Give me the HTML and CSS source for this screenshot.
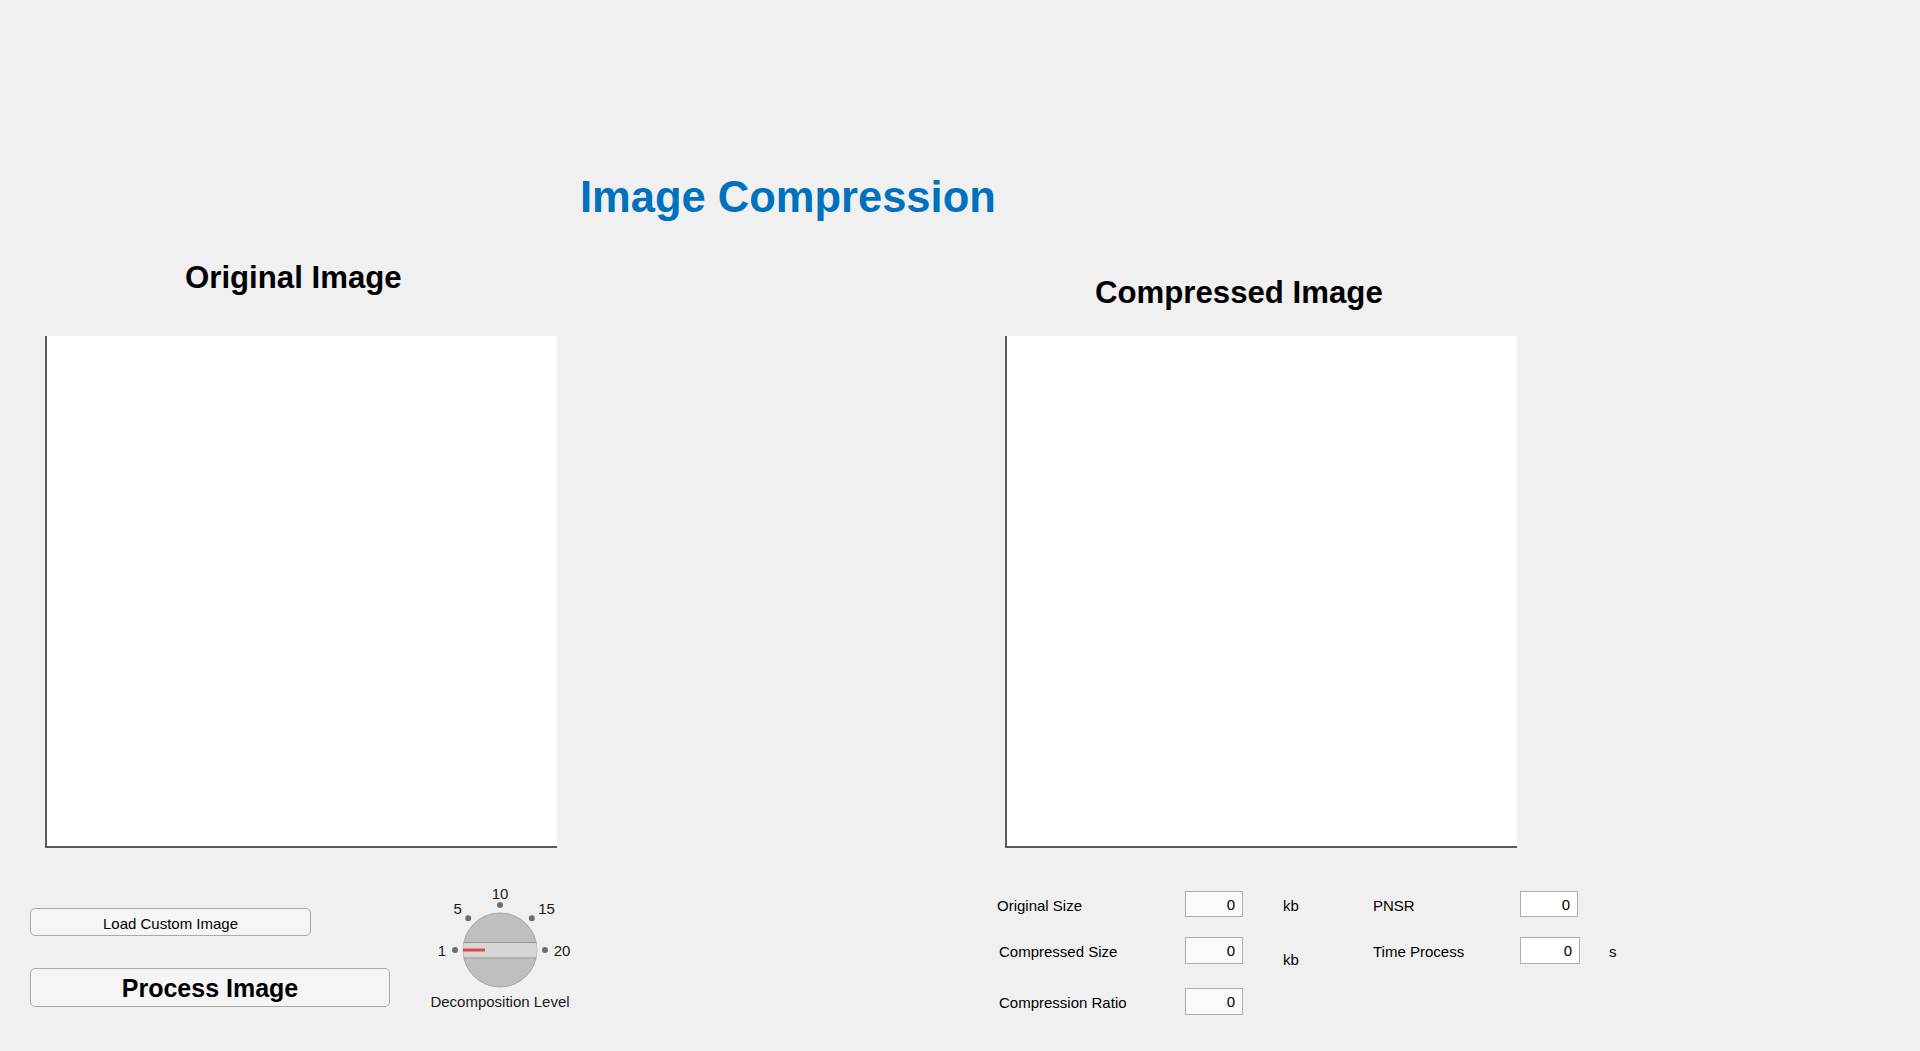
FILE: index.html
```html
<!DOCTYPE html>
<html lang="en">
<head>
<meta charset="utf-8">
<title>Image Compression</title>
<link rel="stylesheet" href="styles.css">
</head>
<body>
<div class="app">
  <h1 class="app-title">Image Compression</h1>

  <div class="panels">
    <section class="panel panel-left">
      <h2 class="panel-title">Original Image</h2>
      <div class="axes"></div>
    </section>
    <section class="panel panel-right">
      <h2 class="panel-title">Compressed Image</h2>
      <div class="axes"></div>
    </section>
  </div>

  <div class="controls">
    <div class="buttons">
      <button class="btn btn-load" type="button">Load Custom Image</button>
      <button class="btn btn-process" type="button">Process Image</button>
    </div>

    <div class="knob">
      <div class="dial">
        <svg class="dial-svg" viewBox="0 0 150 113" width="150" height="113" aria-hidden="true">
          <defs>
            <clipPath id="knobClip"><circle cx="75" cy="70" r="37"/></clipPath>
          </defs>
          <circle cx="75" cy="70" r="37" fill="#bfbfbf" stroke="#a6a6a6" stroke-width="1"/>
          <g clip-path="url(#knobClip)">
            <rect x="37" y="62.5" width="76" height="15.5" fill="#d6d6d6"/>
            <line x1="37" y1="62.5" x2="113" y2="62.5" stroke="#969696" stroke-width="1"/>
            <line x1="37" y1="78" x2="113" y2="78" stroke="#969696" stroke-width="1"/>
          </g>
          <line x1="38" y1="70" x2="60" y2="70" stroke="#e0464c" stroke-width="3"/>
          <circle cx="30" cy="70" r="3" fill="#6e6e6e"/>
          <circle cx="43.2" cy="38.2" r="3" fill="#6e6e6e"/>
          <circle cx="75" cy="25" r="3" fill="#6e6e6e"/>
          <circle cx="106.8" cy="38.2" r="3" fill="#6e6e6e"/>
          <circle cx="120" cy="70" r="3" fill="#6e6e6e"/>
        </svg>
        <span class="tick t1">1</span>
        <span class="tick t5">5</span>
        <span class="tick t10">10</span>
        <span class="tick t15">15</span>
        <span class="tick t20">20</span>
      </div>
      <div class="knob-label">Decomposition Level</div>
    </div>

    <div class="stats">
      <div class="stat-row r1">
        <span class="stat-label">Original Size</span>
        <span class="field field-soft">0</span>
        <span class="unit">kb</span>
        <span class="stat-label2">PNSR</span>
        <span class="field">0</span>
      </div>
      <div class="stat-row r2">
        <span class="stat-label">Compressed Size</span>
        <span class="field field-soft">0</span>
        <span class="unit unit-low">kb</span>
        <span class="stat-label2">Time Process</span>
        <span class="field field-wide">0</span>
        <span class="unit-s">s</span>
      </div>
      <div class="stat-row r3">
        <span class="stat-label">Compression Ratio</span>
        <span class="field field-soft">0</span>
      </div>
    </div>
  </div>
</div>
</body>
</html>
```

FILE: styles.css
```css
html, body {
  margin: 0;
  padding: 0;
}

body {
  background: #f0f0f0;
  font-family: "Liberation Sans", Arial, Helvetica, sans-serif;
  color: #000;
  width: 1920px;
  height: 1051px;
  overflow: hidden;
}

.app-title {
  margin: 0;
  padding: 172px 0 0 580px;
  font-size: 43.5px;
  line-height: 50px;
  font-weight: 700;
  color: #0072bd;
  white-space: nowrap;
}

.panels {
  display: flex;
  padding-left: 45px;
  gap: 448px;
}

.panel {
  width: 512px;
  display: flex;
  flex-direction: column;
}

.panel-title {
  font-size: 31.2px;
  line-height: 36px;
  font-weight: 700;
  color: #000;
  white-space: nowrap;
}

.panel-left .panel-title {
  margin: 38px 0 40px 140px;
}

.panel-right .panel-title {
  margin: 53px 0 25px 90px;
}

.axes {
  width: 512px;
  height: 512px;
  box-sizing: border-box;
  background: #fff;
  border-left: 2px solid #5a5a5a;
  border-bottom: 2px solid #5a5a5a;
}

.controls {
  display: flex;
  align-items: flex-start;
  padding-left: 30px;
  margin-top: 32px;
}

.buttons {
  width: 360px;
  display: flex;
  flex-direction: column;
  align-items: flex-start;
  padding-top: 28px;
}

.btn {
  font-family: inherit;
  color: #000;
  background: #f5f5f5;
  border: 1px solid #a9a9a9;
  border-radius: 5px;
  margin: 0;
  box-sizing: border-box;
}

.btn-load {
  width: 281px;
  height: 28px;
  font-size: 15px;
  padding: 2px 0 0;
}

.btn-process {
  width: 360px;
  height: 39px;
  margin-top: 32px;
  font-size: 25px;
  font-weight: 700;
  padding: 2px 0 0;
}

.knob {
  margin-left: 35px;
  width: 150px;
  display: flex;
  flex-direction: column;
  align-items: center;
}

.dial {
  position: relative;
  width: 150px;
  height: 113px;
}

.dial-svg {
  display: block;
}

.tick {
  position: absolute;
  transform: translate(-50%, -50%);
  font-size: 15px;
  line-height: 15px;
  color: #1a1a1a;
  white-space: nowrap;
}

.t1 { left: 17px; top: 70px; }
.t5 { left: 32.7px; top: 28.3px; }
.t10 { left: 75px; top: 12.7px; }
.t15 { left: 121.5px; top: 28px; }
.t20 { left: 137px; top: 70px; }

.knob-label {
  font-size: 15px;
  line-height: 17px;
  white-space: nowrap;
  color: #1a1a1a;
}

.stats {
  margin-left: 422px;
  padding-top: 11px;
  display: flex;
  flex-direction: column;
}

.stat-row {
  display: flex;
  align-items: center;
  height: 27px;
  font-size: 15px;
}

.stat-row.r1 {
  height: 26px;
}

.stat-row.r2 {
  margin-top: 20px;
}

.stat-row.r3 {
  margin-top: 24px;
}

.stat-label,
.stat-label2,
.unit,
.unit-s {
  line-height: 17px;
  padding-top: 2px;
  box-sizing: border-box;
  white-space: nowrap;
}

.stat-label {
  width: 188px;
}

.r2 .stat-label,
.r3 .stat-label {
  padding-left: 2px;
}

.stat-label2 {
  width: 147px;
}

.field {
  width: 58px;
  height: 100%;
  box-sizing: border-box;
  border: 1px solid #adadad;
  background: #fff;
  text-align: right;
  padding: 3px 7px 0 0;
  line-height: 20px;
}

.field-soft {
  background: #fafafa;
}

.field-wide {
  width: 60px;
}

.unit {
  margin-left: 40px;
  width: 90px;
}

.unit-low {
  align-self: flex-start;
  padding-top: 14px;
}

.unit-s {
  margin-left: 29px;
}
```
